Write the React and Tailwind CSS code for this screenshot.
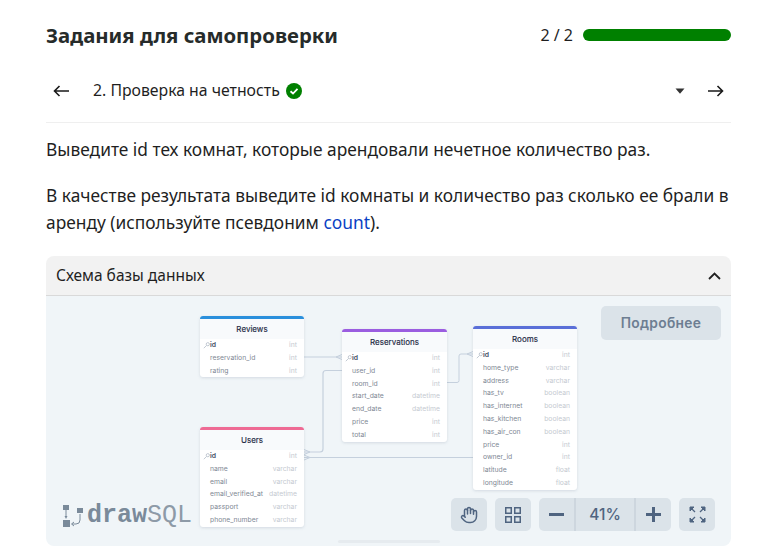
import React from "react";

const reviews = [
  ["id", "int", true],
  ["reservation_id", "int"],
  ["rating", "int"],
];
const reservations = [
  ["id", "int", true],
  ["user_id", "int"],
  ["room_id", "int"],
  ["start_date", "datetime"],
  ["end_date", "datetime"],
  ["price", "int"],
  ["total", "int"],
];
const rooms = [
  ["id", "int", true],
  ["home_type", "varchar"],
  ["address", "varchar"],
  ["has_tv", "boolean"],
  ["has_internet", "boolean"],
  ["has_kitchen", "boolean"],
  ["has_air_con", "boolean"],
  ["price", "int"],
  ["owner_id", "int"],
  ["latitude", "float"],
  ["longitude", "float"],
];
const users = [
  ["id", "int", true],
  ["name", "varchar"],
  ["email", "varchar"],
  ["email_verified_at", "datetime"],
  ["passport", "varchar"],
  ["phone_number", "varchar"],
];

function TableCard({ title, rows, className, barClass }) {
  return (
    <div className={`absolute rounded-[3px] bg-white shadow-[0_1px_3px_rgba(100,116,139,0.2)] overflow-hidden ${className}`}>
      <div className={`h-[3px] ${barClass}`} />
      <div className="h-[20px] bg-[#f8fafc] flex items-center justify-center text-[8px] text-[#1e2a44] [-webkit-text-stroke:0.15px_#1e2a44]">
        {title}
      </div>
      <div>
        {rows.map(([name, type, key]) => (
          <div key={name} className="relative h-[12.8px] flex items-center justify-between pl-[10px] pr-[7px] text-[6.8px] leading-none">
            {key && (
              <svg className="absolute left-[3px] top-[3px]" width="7" height="7" viewBox="0 0 7 7" fill="none" stroke="#b4bcc8" strokeWidth="0.8">
                <circle cx="4.800" cy="2.200" r="1.600" />
                <path d="M3.600 3.400 L0.800 6.200" />
              </svg>
            )}
            <span className={key ? "font-semibold text-[#3d4a5f]" : "text-[#808894]"}>{name}</span>
            <span className="text-[#c5cad1]">{type}</span>
          </div>
        ))}
      </div>
    </div>
  );
}

function ToolButton({ children }) {
  return (
    <div className="h-[33px] w-[36px] flex items-center justify-center rounded-[5px] bg-[#dbe3e9]">
      {children}
    </div>
  );
}

function Connectors() {
  return (
    <svg className="absolute inset-0" width="685" height="250" fill="none" stroke="#c5d0dd" strokeWidth="1">
      {/* reviews -> reservations */}
      <path d="M258 61 H296" />
      <path d="M296 58.500 L290 61 L296 63.500" />
      {/* reservations user_id -> users */}
      <path d="M296 74.500 H280 Q277 74.500 277 77.500 V153 Q277 156 274 156 H258" strokeWidth="1.200" />
      <path d="M258 153.500 L264 156 L258 158.500" />
      {/* rooms owner -> users */}
      <path d="M258 161.500 H427" />
      <path d="M258 159 L264 161.500 L258 164" />
      {/* reservations room_id -> rooms */}
      <path d="M401 86.500 H411 Q413 86.500 413 84.500 V60 Q413 58 415 58 H427" />
      <path d="M427 55.500 L421 58 L427 60.500" />
    </svg>
  );
}

function DrawSqlLogo() {
  return (
    <div className="absolute left-[15px] bottom-[18px] flex items-center gap-[2px]">
      <svg width="24" height="24" viewBox="0 0 24 24" fill="#7a8a9a">
        <rect x="2" y="1" width="6" height="5" />
        <rect x="16" y="4" width="6" height="5" />
        <rect x="2" y="16" width="7" height="7" />
        <path d="M5 6 V13" stroke="#7a8a9a" strokeWidth="1" />
        <path d="M3.500 12 L5 15 L6.500 12 Z" />
        <path d="M19 10 V16 Q19 20 15 20 H11" stroke="#7a8a9a" strokeWidth="1" fill="none" />
        <path d="M13 18 L10.500 20 L13 22" stroke="#7a8a9a" strokeWidth="1" fill="none" />
      </svg>
      <div className="font-['Liberation_Mono',monospace] text-[25px] leading-none text-[#7a8a9a]">
        <span className="font-bold">draw</span>
        <span className="text-[#8d9aa7]">SQL</span>
      </div>
    </div>
  );
}

export default function App() {
  return (
    <div className="h-[550px] w-[760px] overflow-hidden bg-white pl-[46px] pr-[29px] font-['Noto_Sans',sans-serif] text-[#1f1f1f]">
      <div className="h-[70px] flex items-center justify-between">
        <h1 className="text-[20.35px] font-bold text-[#262b2a]">Задания для самопроверки</h1>
        <div className="flex items-center gap-[10px]">
          <span className="text-[16px]">2 / 2</span>
          <div className="h-[12px] w-[148px] rounded-full bg-[#008000]" />
        </div>
      </div>

      <div className="h-[41px] mb-[11px] flex items-center justify-between">
        <div className="flex items-center">
          <svg className="ml-[7px]" width="17" height="12" viewBox="0 0 17 12" fill="none" stroke="#1a1a1a" strokeWidth="1.600">
            <path d="M16 6 H1.500 M6.500 1 L1.500 6 L6.500 11" />
          </svg>
          <span className="ml-[23px] text-[15.8px]">2. Проверка на четность</span>
          <svg className="ml-[6px]" width="16" height="16" viewBox="0 0 16 16">
            <circle cx="8" cy="8" r="8" fill="#008000" />
            <path d="M4.500 8.300 L7 10.500 L11.500 5.800" fill="none" stroke="#fff" strokeWidth="1.800" />
          </svg>
        </div>
        <div className="flex items-center">
          <svg width="10" height="6" viewBox="0 0 10 6" fill="#333">
            <path d="M0.500 0.500 H9.500 L5 5.800 Z" />
          </svg>
          <svg className="ml-[22px] mr-[7px]" width="17" height="12" viewBox="0 0 17 12" fill="none" stroke="#1a1a1a" strokeWidth="1.600">
            <path d="M1 6 H15.500 M10.500 1 L15.500 6 L10.500 11" />
          </svg>
        </div>
      </div>

      <div className="border-t border-[#efefef] pt-[13px] text-[17.35px] leading-[27px]">
        <p>Выведите id тех комнат, которые арендовали нечетное количество раз.</p>
        <p className="mt-[19px]">
          В качестве результата выведите id комнаты и количество раз сколько ее брали в аренду (используйте псевдоним <span className="text-[#0a3fc4]">count</span>).
        </p>
      </div>

      <div className="mt-[20px] rounded-[8px] overflow-hidden">
        <div className="h-[40px] bg-[#f2f2f2] border-b border-[#d9d9d9] flex items-center justify-between px-[10px] text-[15.5px]">
          <span>Схема базы данных</span>
          <svg width="13" height="8" viewBox="0 0 13 8" fill="none" stroke="#222" strokeWidth="1.800">
            <path d="M1 7 L6.500 1.500 L12 7" />
          </svg>
        </div>
        <div className="relative h-[250px] bg-[#f0f5f8] font-['Inter',sans-serif]">
          <Connectors />
          <TableCard title="Reviews" rows={reviews} className="left-[154px] top-[20px] w-[104px]" barClass="bg-[#2a8fdc]" />
          <TableCard title="Reservations" rows={reservations} className="left-[296px] top-[33px] w-[105px]" barClass="bg-[#9b5de0]" />
          <TableCard title="Rooms" rows={rooms} className="left-[427px] top-[30px] w-[104px]" barClass="bg-[#5a6fd8]" />
          <TableCard title="Users" rows={users} className="left-[154px] top-[131px] w-[104px]" barClass="bg-[#ee6a94]" />

          <div className="absolute right-[10px] top-[10px] h-[34px] w-[120px] rounded-[5px] bg-[#dbe3e9] flex items-center justify-center text-[13.8px] font-semibold text-[#6d7e92] tracking-[0.3px]">
            Подробнее
          </div>

          <DrawSqlLogo />

          <div className="absolute right-[16px] top-[202px] flex items-center gap-[8px] text-[#4f6480]">
            <ToolButton>
              <svg width="18" height="18" viewBox="0 0 24 24" fill="none" stroke="#4f6480" strokeWidth="2" strokeLinecap="round" strokeLinejoin="round">
                <path d="M18 11V6a2 2 0 0 0-4 0" />
                <path d="M14 10V4a2 2 0 0 0-4 0v2" />
                <path d="M10 10.500V6a2 2 0 0 0-4 0v8" />
                <path d="M18 8a2 2 0 1 1 4 0v6a8 8 0 0 1-8 8h-2c-2.800 0-4.500-.9-6-2.400L2.400 16a2 2 0 0 1 2.800-2.800L7 15" />
              </svg>
            </ToolButton>
            <ToolButton>
              <svg width="16" height="16" viewBox="0 0 16 16" fill="none" stroke="#4f6480" strokeWidth="1.500">
                <rect x="0.750" y="0.750" width="5.500" height="5.500" />
                <rect x="9.750" y="0.750" width="5.500" height="5.500" />
                <rect x="0.750" y="9.750" width="5.500" height="5.500" />
                <rect x="9.750" y="9.750" width="5.500" height="5.500" />
              </svg>
            </ToolButton>
            <div className="flex h-[33px] w-[132px] rounded-[5px] bg-[#dbe3e9] overflow-hidden">
              <div className="w-[37px] flex items-center justify-center border-r-2 border-[#cdd6de]">
                <div className="h-[3px] w-[15px] bg-[#4f6480]" />
              </div>
              <div className="flex-1 flex items-center justify-center text-[15.5px] font-medium">41%</div>
              <div className="w-[37px] flex items-center justify-center border-l-2 border-[#cdd6de]">
                <svg width="15" height="15" viewBox="0 0 15 15" stroke="#4f6480" strokeWidth="3">
                  <path d="M7.500 0 V15 M0 7.500 H15" />
                </svg>
              </div>
            </div>
            <ToolButton>
              <svg width="17" height="17" viewBox="0 0 17 17" fill="#4f6480" stroke="#4f6480" strokeWidth="1">
                <path d="M1 1 H5 L1 5 Z M16 1 H12 L16 5 Z M1 16 H5 L1 12 Z M16 16 H12 L16 12 Z" />
                <path d="M2 2 L6 6 M15 2 L11 6 M2 15 L6 11 M15 15 L11 11" strokeWidth="1.300" />
              </svg>
            </ToolButton>
          </div>

          <div className="absolute left-[292px] bottom-[3px] h-[3px] w-[102px] rounded-full bg-[#e6ebef]" />
        </div>
      </div>
    </div>
  );
}
